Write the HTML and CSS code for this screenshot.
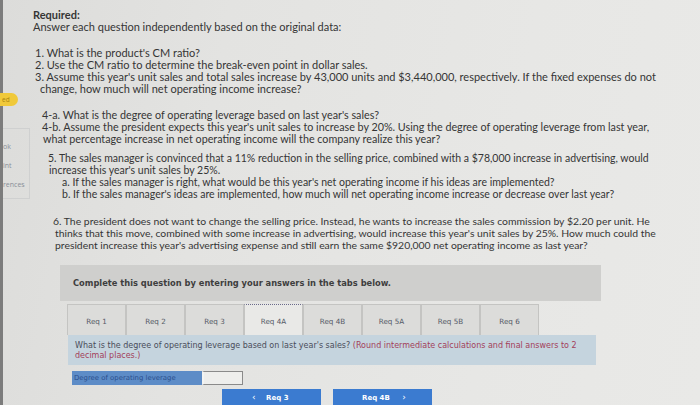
FILE: index.html
```html
<!DOCTYPE html>
<html>
<head>
<meta charset="utf-8">
<link rel="stylesheet" href="styles.css">
</head>
<body>
<div class="page">
  <aside class="side">
    <div class="pill">ed</div>
    <div class="navbox">
      <div class="nav">ok</div>
      <div class="nav">int</div>
      <div class="nav">rences</div>
    </div>
  </aside>
  <main class="main">
    <div class="head">
      <div class="req">Required:</div>
      <div>Answer each question independently based on the original data:</div>
    </div>
    <div class="q q1">
      <div>1. What is the product's CM ratio?</div>
      <div>2. Use the CM ratio to determine the break-even point in dollar sales.</div>
      <div>3. Assume this year's unit sales and total sales increase by 43,000 units and $3,440,000, respectively. If the fixed expenses do not</div>
      <div class="cont">change, how much will net operating income increase?</div>
    </div>
    <div class="q q4">
      <div>4-a. What is the degree of operating leverage based on last year's sales?</div>
      <div>4-b. Assume the president expects this year's unit sales to increase by 20%. Using the degree of operating leverage from last year,</div>
      <div class="cont">what percentage increase in net operating income will the company realize this year?</div>
    </div>
    <div class="q q5">
      <div>5. The sales manager is convinced that a 11% reduction in the selling price, combined with a $78,000 increase in advertising, would</div>
      <div class="cont1">increase this year's unit sales by 25%.</div>
      <div class="sub">a. If the sales manager is right, what would be this year's net operating income if his ideas are implemented?</div>
      <div class="sub">b. If the sales manager's ideas are implemented, how much will net operating income increase or decrease over last year?</div>
    </div>
    <div class="q q6">
      <div>6. The president does not want to change the selling price. Instead, he wants to increase the sales commission by $2.20 per unit. He</div>
      <div class="cont1">thinks that this move, combined with some increase in advertising, would increase this year's unit sales by 25%. How much could the</div>
      <div class="cont1">president increase this year's advertising expense and still earn the same $920,000 net operating income as last year?</div>
    </div>
    <div class="complete">Complete this question by entering your answers in the tabs below.</div>
    <div class="tabs">
      <div class="tab">Req 1</div>
      <div class="tab">Req 2</div>
      <div class="tab">Req 3</div>
      <div class="tab active">Req 4A</div>
      <div class="tab">Req 4B</div>
      <div class="tab">Req 5A</div>
      <div class="tab">Req 5B</div>
      <div class="tab">Req 6</div>
    </div>
    <div class="prompt">
      <div>What is the degree of operating leverage based on last year's sales? <span class="hint">(Round intermediate calculations and final answers to 2</span></div>
      <div class="hint">decimal places.)</div>
    </div>
    <div class="answer">
      <div class="label">Degree of operating leverage</div>
      <div class="input"></div>
    </div>
    <div class="navbtns">
      <div class="btn prev"><span class="chev">&lsaquo;</span> Req 3</div>
      <div class="btn next">Req 4B <span class="chev">&rsaquo;</span></div>
    </div>
  </main>
</div>
</body>
</html>
```
FILE: styles.css
```css
html, body {
  margin: 0;
  padding: 0;
}
body {
  width: 700px;
  height: 405px;
  overflow: hidden;
}
.page {
  display: flex;
  width: 700px;
  height: 405px;
  background: linear-gradient(100deg, #dcdcda 0%, #e3e3e1 30%, #e7e7e5 70%, #e9e9e7 100%);
  font-family: Lato, "Open Sans", sans-serif;
  color: #353535;
}
.side {
  width: 27px;
  flex: none;
  border-left: 3px solid #7c7c7c;
  padding-top: 93px;
  font-family: "Open Sans", sans-serif;
  font-size: 7px;
  color: #8a8f98;
}
.pill {
  width: 18px;
  height: 13px;
  margin-left: -3px;
  background: #f0c93a;
  border-radius: 0 7px 7px 0;
  color: #a88410;
  line-height: 13px;
  font-size: 6.5px;
  text-indent: 2px;
}
.navbox {
  margin-top: 22px;
  width: 26px;
  border: 1px solid #cfd0d0;
  border-left: none;
  padding: 8px 0 4px;
}
.nav {
  height: 19px;
  line-height: 19px;
  overflow: hidden;
  white-space: nowrap;
  direction: rtl;
  text-align: left;
  padding-right: 2px;
}
.main {
  flex: 1;
  padding-top: 9px;
  font-size: 11px;
  line-height: 12px;
}
.head {
  margin-left: 3px;
}
.req {
  font-weight: bold;
}
.q {
  margin-top: 14px;
  white-space: nowrap;
}
.q1 { margin-left: 5px; }
.q1 .cont { margin-left: 5px; }
.q4 { margin-left: 12px; font-size: 10.75px; }
.q4 .cont { margin-left: 1px; }
.q5 { margin-left: 18px; margin-top: 7px; font-size: 10.5px; }
.q5 .cont1 { margin-left: 1px; }
.q5 .sub { margin-left: 14px; }
.q6 { margin-left: 23px; margin-top: 15px; font-size: 10.4px; }
.q6 .cont1 { margin-left: 2px; }
.complete {
  margin: 14px 0 0 30px;
  width: 541px;
  height: 36px;
  padding-left: 13px;
  box-sizing: border-box;
  background: #cfcfcd;
  font-family: "DejaVu Sans", sans-serif;
  font-weight: bold;
  font-size: 8.3px;
  line-height: 36px;
  color: #3e3e3e;
  white-space: nowrap;
}
.tabs {
  display: flex;
  margin: 3px 0 0 37px;
}
.tab {
  width: 59px;
  height: 31px;
  box-sizing: border-box;
  border: 1px solid #c4c4c2;
  border-bottom: none;
  background: #dcdcda;
  text-align: center;
  font-family: "DejaVu Sans", sans-serif;
  font-size: 7.2px;
  line-height: 33px;
  color: #555a66;
}
.tab.active {
  background: #e9e9e7;
  border-top: 1px dotted #6a6a8a;
}
.prompt {
  margin-left: 38px;
  width: 528px;
  height: 30px;
  box-sizing: border-box;
  padding: 6px 0 0 7px;
  background: #c5d4de;
  font-family: "DejaVu Sans", sans-serif;
  font-size: 8px;
  line-height: 10px;
  color: #4a4d5a;
  white-space: nowrap;
}
.hint {
  color: #a3405a;
}
.answer {
  display: flex;
  margin: 6px 0 0 42px;
  height: 14px;
}
.label {
  width: 130px;
  background: #5d8cc7;
  color: #2b4f8e;
  font-family: "DejaVu Sans", sans-serif;
  font-size: 6.9px;
  line-height: 14px;
  padding-left: 2px;
  box-sizing: border-box;
  white-space: nowrap;
}
.input {
  width: 41px;
  box-sizing: border-box;
  border: 1px solid #8a8a8a;
  border-left: 2px solid #f4f4f2;
  background: #eeeeec;
}
.navbtns {
  display: flex;
  gap: 12px;
  margin: 4px 0 0 192px;
}
.btn {
  width: 99px;
  height: 20px;
  background: #3b7bd0;
  color: #ffffff;
  font-family: "DejaVu Sans", sans-serif;
  font-weight: bold;
  font-size: 7px;
  line-height: 17px;
  box-sizing: border-box;
  white-space: nowrap;
}
.prev { padding-left: 30px; }
.next { padding-left: 29px; }
.chev {
  font-weight: normal;
  font-size: 9px;
  margin: 0 8px;
}
.prev .chev { margin-left: 0; }
.next .chev { margin-right: 0; margin-left: 10px; }
```
